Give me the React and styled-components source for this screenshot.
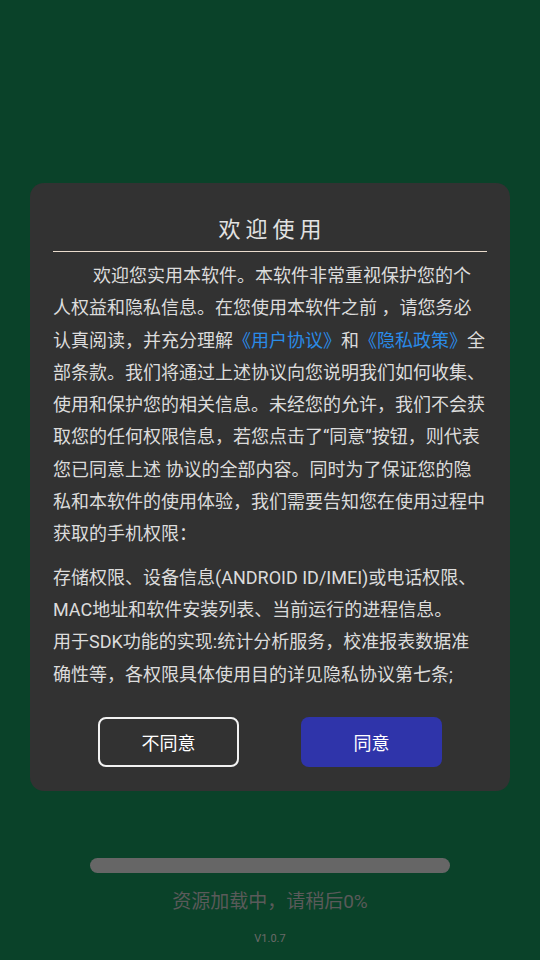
import React from 'react';
import styled, { createGlobalStyle } from 'styled-components';

const GlobalStyle = createGlobalStyle`
  html, body {
    margin: 0;
    padding: 0;
    background: #0a4229;
  }
  body {
    font-family: Roboto, "Noto Sans CJK SC", sans-serif;
  }
`;

const Page = styled.div`
  width: 540px;
  height: 960px;
  background: #0a4229;
  display: flex;
  flex-direction: column;
  align-items: center;
  overflow: hidden;
`;

const Card = styled.div`
  margin-top: 183px;
  width: 480px;
  height: 608px;
  box-sizing: border-box;
  background: #323232;
  border-radius: 14px;
  padding: 32px 23px 0 23px;
  display: flex;
  flex-direction: column;
`;

const Title = styled.div`
  text-align: center;
  color: #e2e2e2;
  font-size: 22px;
  line-height: 30px;
  letter-spacing: 5px;
  padding-left: 5px;
`;

const Divider = styled.div`
  height: 1px;
  background: #eadccd;
  margin-top: 6px;
`;

const Paragraph = styled.p`
  margin: ${(p) => p.$top}px 0 0 0;
  color: #dcdcdc;
  font-size: 18px;
  line-height: 32.3px;
  text-indent: ${(p) => (p.$indent ? '40px' : '0')};
  word-break: break-all;
`;

const Link = styled.span`
  color: #2a8be8;
`;

const Buttons = styled.div`
  display: flex;
  justify-content: space-between;
  padding: 0 45px 0 45px;
  margin-top: 26px;
`;

const Button = styled.div`
  width: 141px;
  height: 50px;
  box-sizing: border-box;
  border-radius: 8px;
  display: flex;
  align-items: center;
  justify-content: center;
  font-size: 18px;
  color: #ffffff;
  border: ${(p) => (p.$primary ? 'none' : '2px solid #f2f2f2')};
  background: ${(p) => (p.$primary ? '#2f34aa' : 'transparent')};
`;

const Bottom = styled.div`
  margin-top: 67px;
  display: flex;
  flex-direction: column;
  align-items: center;
`;

const Track = styled.div`
  width: 360px;
  height: 15px;
  border-radius: 8px;
  background: #666666;
`;

const Loading = styled.div`
  margin-top: 15px;
  font-size: 19px;
  line-height: 28px;
  color: #5a5a5a;
`;

const Version = styled.div`
  margin-top: 16px;
  font-size: 11px;
  color: #6a6a6a;
`;

export default function App() {
  return (
    <Page>
      <GlobalStyle />
      <Card>
        <Title>欢迎使用</Title>
        <Divider />
        <Paragraph $indent $top={8}>
          欢迎您实用本软件。本软件非常重视保护您的个人权益和隐私信息。在您使用本软件之前 ，请您务必认真阅读，并充分理解
          <Link>《用户协议》</Link>和<Link>《隐私政策》</Link>
          全部条款。我们将通过上述协议向您说明我们如何收集、使用和保护您的相关信息。未经您的允许，我们不会获取您的任何权限信息，若您点击了“同意”按钮，则代表您已同意上述 协议的全部内容。同时为了保证您的隐私和本软件的使用体验，我们需要告知您在使用过程中获取的手机权限：
        </Paragraph>
        <Paragraph $top={11}>
          存储权限、设备信息(ANDROID ID/IMEI)或电话权限、MAC地址和软件安装列表、当前运行的进程信息。
          <br />
          用于SDK功能的实现:统计分析服务，校准报表数据准确性等，各权限具体使用目的详见隐私协议第七条;
        </Paragraph>
        <Buttons>
          <Button>不同意</Button>
          <Button $primary>同意</Button>
        </Buttons>
      </Card>
      <Bottom>
        <Track />
        <Loading>资源加载中，请稍后0%</Loading>
        <Version>V1.0.7</Version>
      </Bottom>
    </Page>
  );
}
